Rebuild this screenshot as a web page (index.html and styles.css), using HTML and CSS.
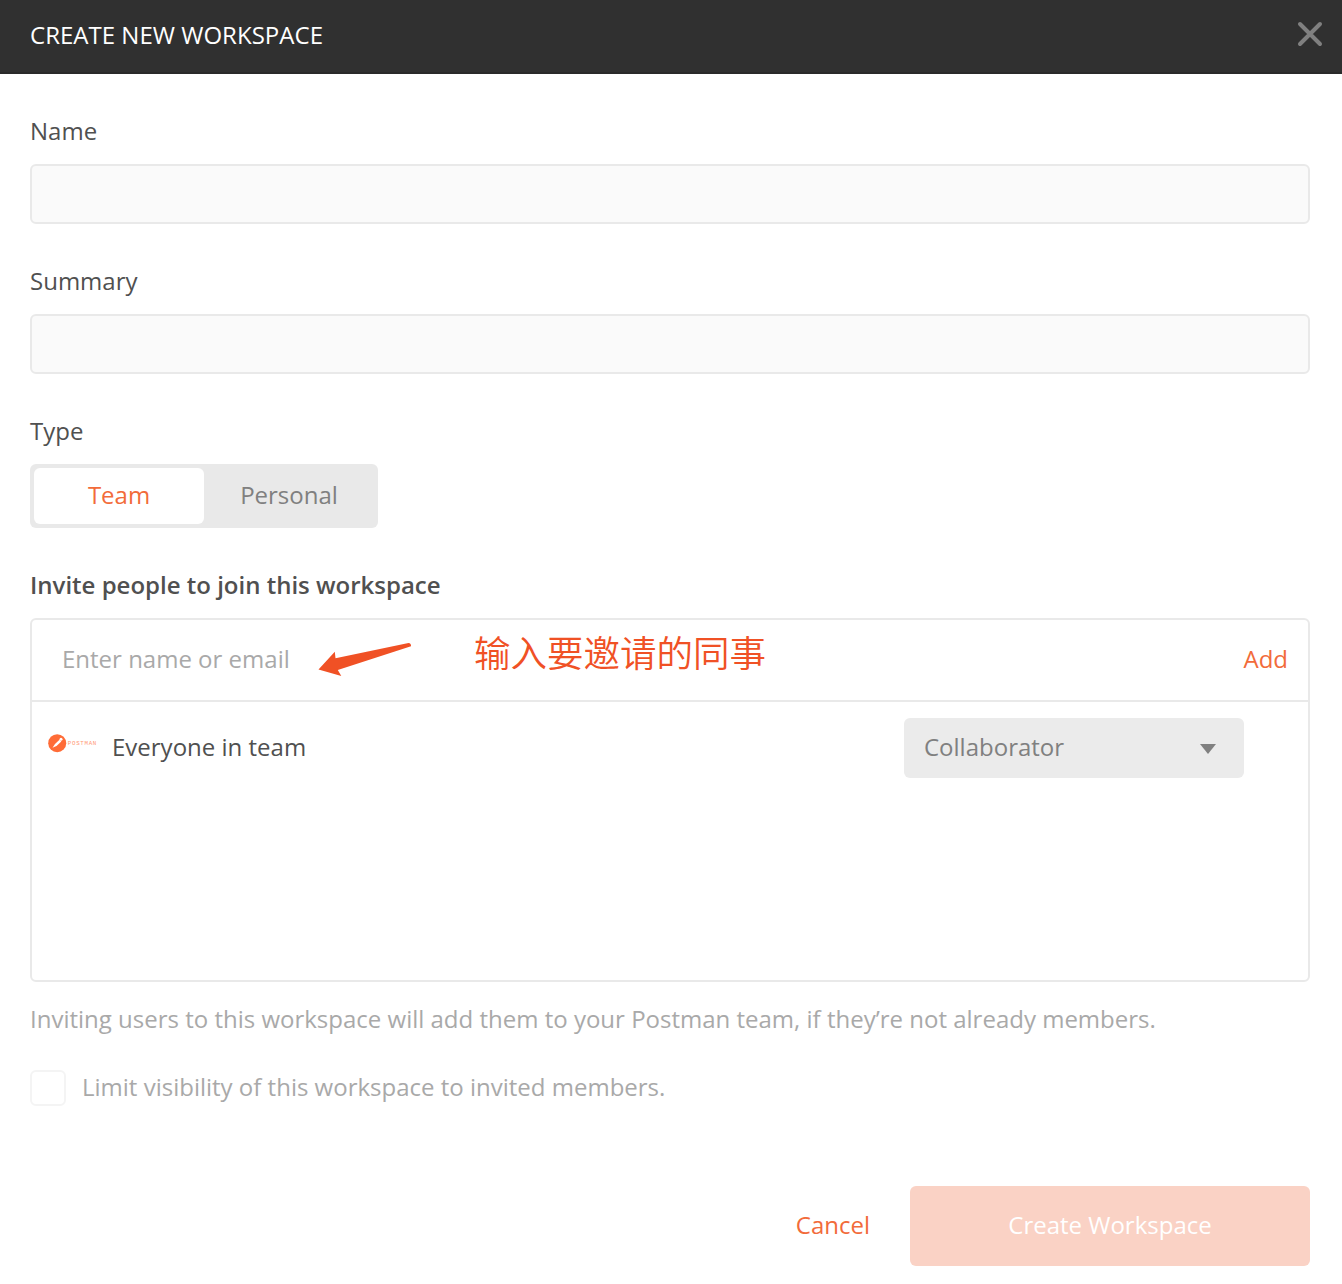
FILE: index.html
```html
<!DOCTYPE html>
<html lang="en">
<head>
<meta charset="utf-8">
<title>Create New Workspace</title>
<link rel="stylesheet" href="styles.css">
</head>
<body>
<div class="modal">
  <header class="modal-header">
    <h1 class="modal-title">CREATE NEW WORKSPACE</h1>
    <svg class="close-icon" width="26" height="26" viewBox="0 0 26 26"><path d="M3 3 23 23M23 3 3 23"/></svg>
  </header>
  <main class="modal-body">
    <div class="field">
      <label class="label" for="name">Name</label>
      <input class="text-input" id="name" type="text">
    </div>
    <div class="field">
      <label class="label" for="summary">Summary</label>
      <input class="text-input" id="summary" type="text">
    </div>
    <div class="field">
      <div class="label">Type</div>
      <div class="toggle">
        <div class="toggle-option toggle-active">Team</div>
        <div class="toggle-option">Personal</div>
      </div>
    </div>
    <h2 class="invite-title">Invite people to join this workspace</h2>
    <section class="invite-box">
      <div class="invite-entry">
        <span class="placeholder">Enter name or email</span>
        <span class="link">Add</span>
        <svg class="arrow" width="94" height="36" viewBox="0 0 94 36"><path d="M.5 29.5 16.800 11.700 17.500 18.200 90.500 3Q93.300 3.200 93 6.300L19.800 30 23.300 36Z"/></svg>
        <span class="note" lang="zh">输入要邀请的同事</span>
      </div>
      <div class="member">
        <svg class="team-logo" width="50" height="20" viewBox="0 0 50 20">
          <circle class="logo-disc" cx="9.200" cy="9.200" r="9"/>
          <path class="logo-pen" d="M4.500 13.800 7 10 11.500 5.700 13.300 7.400 8.500 12Z"/>
          <circle class="logo-pen" cx="13" cy="5.300" r="1.500"/>
          <text class="logo-text" x="19.800" y="11.400" textLength="28.500">POSTMAN</text>
        </svg>
        <span class="member-name">Everyone in team</span>
        <div class="role-select">
          <span>Collaborator</span>
          <svg class="caret" width="16" height="10" viewBox="0 0 16 10"><path d="M0 0H16L8 10Z"/></svg>
        </div>
      </div>
    </section>
    <p class="hint">Inviting users to this workspace will add them to your Postman team, if they’re not already members.</p>
    <div class="visibility">
      <span class="checkbox"></span>
      <span>Limit visibility of this workspace to invited members.</span>
    </div>
  </main>
  <footer class="modal-footer">
    <span class="link">Cancel</span>
    <div class="submit">Create Workspace</div>
  </footer>
</div>
</body>
</html>
```
FILE: styles.css
```css
* { box-sizing: border-box; }

body {
  margin: 0;
  background: #fff;
  color: #505050;
  font: 24px/32px "Open Sans", "Noto Sans CJK SC", sans-serif;
}

.modal {
  display: flex;
  flex-direction: column;
  height: 1284px;
}

.modal-header {
  display: flex;
  justify-content: space-between;
  align-items: flex-start;
  height: 74px;
  padding: 19px 19px 0 30px;
  background: #303030;
  border-bottom: 2px solid #2a2a2a;
}

.modal-title {
  margin: 0;
  color: #fff;
  font-size: 24px;
  font-weight: 400;
  letter-spacing: 0.02px;
}

.close-icon {
  margin-top: 2px;
  fill: none;
  stroke: #808080;
  stroke-width: 4;
  stroke-linecap: round;
}

.modal-body { padding: 41px 32px 0 30px; }

.field { margin-bottom: 41px; }

.label {
  display: block;
  margin-bottom: 17px;
}

.text-input {
  display: block;
  width: 100%;
  height: 60px;
  padding: 0 16px;
  border: 2px solid #e9e9e9;
  border-radius: 6px;
  background: #fafafa;
  color: inherit;
  font: inherit;
}

.toggle {
  display: flex;
  width: 348px;
  height: 64px;
  padding: 4px;
  border-radius: 6px;
  background: #e9e9e9;
}

.toggle-option {
  flex: 1;
  padding: 11px 0;
  border-radius: 6px;
  color: #808080;
  text-align: center;
}

.toggle-active {
  background: #fff;
  color: #f26b3a;
}

.invite-title {
  margin: 0 0 17px;
  font-size: 24px;
  font-weight: 600;
  line-height: 32px;
}

.invite-box {
  height: 364px;
  border: 2px solid #e9e9e9;
  border-radius: 6px;
}

.invite-entry {
  position: relative;
  display: flex;
  justify-content: space-between;
  height: 82px;
  padding: 23px 20px 0 30px;
  border-bottom: 2px solid #e9e9e9;
}

.placeholder { color: #a9a9a9; }

.link { color: #f26b3a; }

/* Annotation laid over the entry row */
.arrow {
  position: absolute;
  left: 286px;
  top: 20px;
  fill: #f05125;
}

.note {
  position: absolute;
  left: 442px;
  top: 7px;
  color: #f05125;
  font: 350 36.5px/50px "Noto Sans CJK SC", sans-serif;
  white-space: nowrap;
}

.member {
  display: flex;
  align-items: flex-start;
  padding: 16px 64px 0 16px;
}

.team-logo { margin-top: 16px; }

.logo-disc { fill: #ff6c37; }

.logo-pen { fill: #fff; }

.logo-text {
  fill: #ff9a76;
  font: 5.8px "Liberation Mono", monospace;
}

.member-name {
  margin: 13px auto 0 14px;
}

.role-select {
  display: flex;
  justify-content: space-between;
  align-items: flex-start;
  width: 340px;
  height: 60px;
  padding: 13px 28px 0 20px;
  border-radius: 6px;
  background: #ebebeb;
  color: #808080;
}

.caret {
  margin-top: 13px;
  fill: #808080;
}

.hint {
  margin: 21px 0 35px;
  color: #a9a9a9;
}

.visibility {
  display: flex;
  gap: 16px;
  color: #a9a9a9;
  line-height: 34px;
}

.checkbox {
  width: 36px;
  height: 36px;
  border: 2px solid #f4f4f4;
  border-radius: 6px;
}

.modal-footer {
  display: flex;
  justify-content: flex-end;
  align-items: flex-start;
  gap: 40px;
  margin-top: auto;
  padding: 0 32px 18px 0;
}

.modal-footer .link { padding-top: 23px; }

.submit {
  width: 400px;
  height: 80px;
  padding-top: 23px;
  border-radius: 6px;
  background: #fad2c5;
  color: #fff;
  text-align: center;
}
```
